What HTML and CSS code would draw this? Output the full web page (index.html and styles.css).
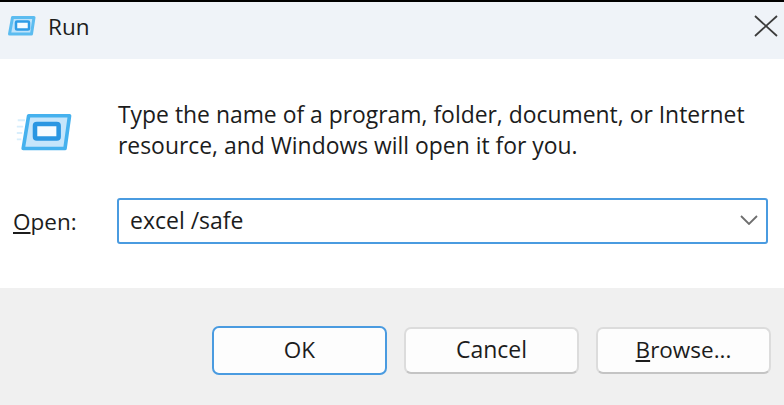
FILE: index.html
```html
<!DOCTYPE html>
<html>
<head>
    <title>Run</title>
    <link rel="stylesheet" href="styles.css">
</head>
<body>
    <div class="titlebar">
        <svg class="title-icon" width="30" height="22" viewBox="0 0 30 22">
            <path d="M6.5 2.5H28L25.5 19H3.5Z" fill="#bfe3fa" stroke="#5cbcf0" stroke-width="3" stroke-linejoin="round"/>
            <rect x="10" y="6.5" width="13" height="8" rx="1" fill="#f4fbff" stroke="#2f9ce6" stroke-width="2.5"/>
        </svg>
        <span class="title-text">Run</span>
        <svg class="close-icon" width="24" height="22" viewBox="0 0 24 22">
            <path d="M1 1L23 21M23 1L1 21" stroke="#3c3c3c" stroke-width="1.8" fill="none"/>
        </svg>
    </div>
    <div class="content">
        <div class="intro">
            <svg class="run-icon" width="58" height="40" viewBox="0 0 62 44">
                <path d="M1 8H9M0 15H7M0 22H6M0 29H5" stroke="#d8eefc" stroke-width="2" fill="none"/>
                <path d="M13 3H58L53 39H7Z" fill="#c5e5fb" stroke="#45b1ee" stroke-width="4" stroke-linejoin="round"/>
                <rect x="20" y="12" width="26" height="16" rx="2" fill="#f6fbff" stroke="#2a96e2" stroke-width="5"/>
            </svg>
            <p class="message">Type the name of a program, folder, document, or Internet<br>resource, and Windows will open it for you.</p>
        </div>
        <div class="open-row">
            <label class="open-label"><u>O</u>pen:</label>
            <div class="combo">
                <span class="combo-value">excel /safe</span>
                <svg class="combo-arrow" width="18" height="10" viewBox="0 0 18 10">
                    <path d="M1 1L9 9L17 1" stroke="#6e6e6e" stroke-width="1.8" fill="none"/>
                </svg>
            </div>
        </div>
    </div>
    <div class="footer">
        <button class="btn btn-default">OK</button>
        <button class="btn btn-cancel">Cancel</button>
        <button class="btn"><u>B</u>rowse...</button>
    </div>
</body>
</html>
```

FILE: styles.css
```css
html, body {
    height: 100%;
}

body {
    margin: 0;
    display: flex;
    flex-direction: column;
    background: #fff;
    color: #1c1c1c;
    font-family: "Open Sans", "Noto Sans", sans-serif;
    font-size: 22.5px;
    overflow: hidden;
}

.titlebar {
    flex: none;
    display: flex;
    align-items: center;
    height: 59px;
    padding: 0 6px 9px 6px;
    box-sizing: border-box;
    border-top: 2px solid #000;
    background: #eff3f8;
}

.title-icon {
    margin-right: 12px;
}

.title-text {
    flex: 1;
}

.content {
    height: 229px;
    padding: 0 16px 0 13px;
    box-sizing: border-box;
}

.intro {
    display: flex;
    padding-top: 40px;
}

.run-icon {
    flex: none;
    margin: 14px 0 0 3px;
}

.message {
    margin: 0 0 0 44px;
    font-size: 22.9px;
    line-height: 31px;
    white-space: nowrap;
}

.open-row {
    display: flex;
    align-items: center;
    margin-top: 37px;
}

.open-label {
    width: 104px;
}

.combo {
    flex: 1;
    display: flex;
    align-items: center;
    justify-content: space-between;
    height: 46px;
    padding: 0 8px 3px 11px;
    box-sizing: border-box;
    border: 2px solid #4a9be0;
    border-radius: 3px;
    font-size: 23px;
}

.footer {
    flex: 1;
    display: flex;
    align-items: flex-start;
    gap: 17px;
    padding: 38px 12px 0 212px;
    background: #f0f0f0;
}

.btn {
    width: 175px;
    height: 47px;
    margin-top: 1px;
    padding: 0 0 3px;
    font: inherit;
    color: #1c1c1c;
    background: #fdfdfd;
    border: 2px solid #dcdcdc;
    border-bottom-color: #c4c4c4;
    border-radius: 7px;
}

.btn-default {
    height: 49px;
    margin-top: 0;
    border-color: #4a9be0;
}

.btn-cancel {
    font-size: 23px;
}
```
